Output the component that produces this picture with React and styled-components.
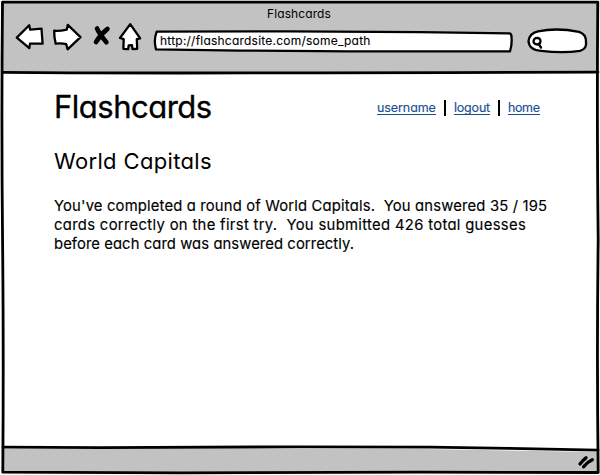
import React from "react";
import styled, { createGlobalStyle } from "styled-components";

const Global = createGlobalStyle`
  * { box-sizing: border-box; }
  body { margin: 0; background: #fff; }
`;

const Window = styled.main`
  position: relative;
  width: 600px;
  height: 475px;
  padding: 2px 2px 3px 3px;
  display: flex;
  flex-direction: column;
  overflow: hidden;
  color: #000;
  font-family: Inter, "Liberation Sans", sans-serif;
  font-feature-settings: "cv11";
`;

const Chrome = styled.header`
  height: 70px;
  flex: none;
  background: #c2c2c2;
  display: flex;
  flex-direction: column;
`;

const WindowTitle = styled.div`
  height: 24px;
  padding-left: 264px;
  font-size: 12px;
  line-height: 23px;
  letter-spacing: 0.1px;
`;

const Toolbar = styled.div`
  display: flex;
  height: 40px;
`;

const NavIcons = styled.svg`
  width: 147px;
  height: 40px;
  flex: none;
  overflow: visible;
`;

const Field = styled.div`
  position: relative;
  width: ${(p) => p.$width}px;
  height: 40px;
  margin-left: ${(p) => p.$gap || 0}px;
  flex: none;
`;

const FieldShape = styled.svg`
  display: block;
  width: 100%;
  height: 100%;
`;

const Address = styled.span`
  position: absolute;
  left: 10px;
  top: 6px;
  font-size: 12px;
  line-height: 18px;
  letter-spacing: ${(p) => p.$track}px;
  -webkit-text-stroke: 0.1px #000;
  white-space: nowrap;
`;

const Page = styled.section`
  flex: 1;
  padding: 19px 30px 0 51px;
`;

const PageHead = styled.div`
  display: flex;
  height: 32px;
`;

const Heading = styled.h1`
  margin: 0;
  width: 323px;
  font-size: 31px;
  line-height: 32px;
  font-weight: 400;
  -webkit-text-stroke: 0.35px #000;
  letter-spacing: ${(p) => p.$track}px;
`;

const Links = styled.nav`
  display: flex;
  padding-top: 9px;
  height: 25px;
`;

const Link = styled.a`
  width: ${(p) => p.$width}px;
  height: 15px;
  font-size: 12.5px;
  line-height: 15px;
  letter-spacing: ${(p) => p.$track}px;
  color: #1b4f93;
  -webkit-text-stroke: 0.15px #1b4f93;
  border-bottom: 1px solid #0f519c;
  white-space: nowrap;
`;

const Divider = styled.span`
  width: 2px;
  height: 16px;
  margin: 0 8px;
  background: #000;
`;

const Subheading = styled.h2`
  margin: 24px 0 0;
  font-size: 22px;
  line-height: 28px;
  font-weight: 400;
  letter-spacing: ${(p) => p.$track}px;
`;

const Summary = styled.p`
  margin: 22px 0 0;
`;

const Line = styled.span`
  display: block;
  font-size: 14.8px;
  line-height: 19px;
  -webkit-text-stroke: 0.15px #000;
  letter-spacing: ${(p) => p.$track}px;
  white-space: pre;
`;

const StatusBar = styled.footer`
  height: 23px;
  flex: none;
  background: #c2c2c2;
  clip-path: polygon(0 0, 420px 0, 100% 3px, 100% 100%, 0 100%);
`;

const Outline = styled.svg`
  position: absolute;
  inset: 0;
  width: 600px;
  height: 475px;
  pointer-events: none;
`;

const ink = { stroke: "#000", strokeLinejoin: "round", strokeLinecap: "round" };

function Navigation() {
  return (
    <NavIcons viewBox="3 26 147 40" {...ink} fill="#fff" strokeWidth="2.3">
      <path d="M16.8 37.6L29.2 25.2L30.2 29.7L41.5 28.7L42.6 43.5L30 43.7L29.3 48.1Z" />
      <path d="M54.2 30.7Q59 31.3 66.8 29.6L67.8 24.8L80.5 37.1L67.6 49.3L66.2 44.1Q62 43 55.7 43.6Q54 37 54.2 30.7Z" />
      <path d="M97 28.5Q99.5 34 106.4 42.3M107.5 28.9Q101 34 96 42" fill="none" strokeWidth="4.6" />
      <path d="M130.2 24.1L140.2 38.3L136.8 39.2L137.2 48.8L132.4 49L132 45.2L128.7 45.3L128.2 49.2L123.4 48.8L123.7 39.2L120 38Z" />
    </NavIcons>
  );
}

function SketchFrame() {
  return (
    <Outline viewBox="0 0 600 475" {...ink} fill="none" strokeWidth="2.8">
      <path d="M2.5 2.2L300 2.1L597.8 2.1Q596.8 115 598.2 240Q596.7 355 598.2 472.5L420 472.2L180 472.8L2.8 472.2Q3.7 350 2.6 245Q1.3 120 2.5 2.2Z" />
      <path d="M3 72.3L70 72.9L180 73L320 72.9L450 72.7L598 72.1" />
      <path d="M3 447.1L100 447.7L300 446.8L430 447.2L510 448.3L598 450.2" />
      <path d="M580 464Q583 460 586 457.8M583.6 466.8Q587 462 592.3 459.7" strokeWidth="3.3" />
    </Outline>
  );
}

export default function App() {
  return (
    <>
      <Global />
      <Window>
        <Chrome>
          <WindowTitle>Flashcards</WindowTitle>
          <Toolbar>
            <Navigation />
            <Field $width={366}>
              <FieldShape viewBox="150 26 366 40" {...ink} fill="#fff" strokeWidth="2.3">
                <path d="M156.7 31.6L290 31.4L420 32.1L509.5 33.4Q511.7 34 511.5 37Q512.2 45 510 51.3L350 51.4L240 50.6L156 49.4Q153.4 40 156.7 31.6Z" />
              </FieldShape>
              <Address $track={0.22}>http://flashcardsite.com/some_path</Address>
            </Field>
            <Field $width={80} $gap={4}>
              <FieldShape viewBox="520 26 80 40" {...ink} fill="#fff" strokeWidth="2.3">
                <path d="M538 31.3Q557 27.5 579 31.8Q586.3 34 586 42Q587 49 580 50.8Q563 53.3 541 50.8Q529 50 528.5 41Q529 33.5 538 31.3Z" />
                <path d="M535.5 38.2Q540.5 37.2 540.5 41.3Q540 45 536.5 44.4Q532.8 43.3 533.7 40.3Q534.2 38.7 535.5 38.2M538.6 43.8L541 47.5" />
              </FieldShape>
            </Field>
          </Toolbar>
        </Chrome>
        <Page>
          <PageHead>
            <Heading $track={-0.5}>Flashcards</Heading>
            <Links>
              <Link $width={59} $track={-0.08}>username</Link>
              <Divider />
              <Link $width={36} $track={-0.2}>logout</Link>
              <Divider />
              <Link $width={32} $track={-0.4}>home</Link>
            </Links>
          </PageHead>
          <Subheading $track={0.35}>World Capitals</Subheading>
          <Summary>
            <Line $track={0.17}>You've completed a round of World Capitals.  You answered 35 / 195</Line>
            <Line $track={0.33}>cards correctly on the first try.  You submitted 426 total guesses</Line>
            <Line $track={0.08}>before each card was answered correctly.</Line>
          </Summary>
        </Page>
        <StatusBar />
        <SketchFrame />
      </Window>
    </>
  );
}
